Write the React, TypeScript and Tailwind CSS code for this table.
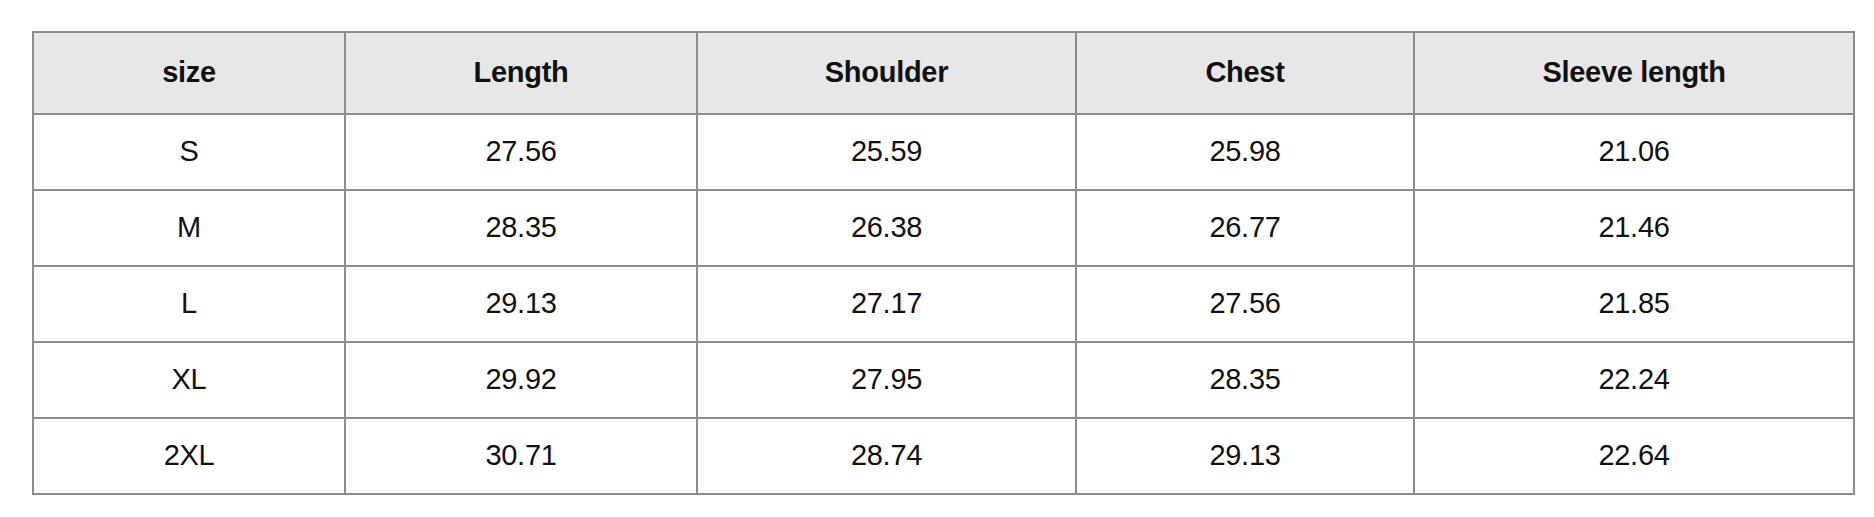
import React from 'react';

const headers = ['size', 'Length', 'Shoulder', 'Chest', 'Sleeve length'];

const rows = [
  ['S', '27.56', '25.59', '25.98', '21.06'],
  ['M', '28.35', '26.38', '26.77', '21.46'],
  ['L', '29.13', '27.17', '27.56', '21.85'],
  ['XL', '29.92', '27.95', '28.35', '22.24'],
  ['2XL', '30.71', '28.74', '29.13', '22.64'],
];

const colWidths = ['w-[312px]', 'w-[352px]', 'w-[379px]', 'w-[338px]', 'w-[440px]'];

export default function App() {
  return (
    <div className="min-h-[517px] bg-white pt-[31px] pl-[32px] font-['Liberation_Sans',Arial,sans-serif] text-[#111]">
      <table className="table-fixed border-collapse border-2 border-[#8c8c8c] w-[1823px] text-[29px] tracking-[-0.01em]">
        <colgroup>
          {colWidths.map((w, i) => (
            <col key={i} className={w} />
          ))}
        </colgroup>
        <thead>
          <tr className="bg-[#e7e7e7]">
            {headers.map((h) => (
              <th
                key={h}
                className="h-[82px] border-2 border-[#8c8c8c] p-0 text-center align-middle font-bold"
              >
                {h}
              </th>
            ))}
          </tr>
        </thead>
        <tbody>
          {rows.map((row) => (
            <tr key={row[0]}>
              {row.map((cell, i) => (
                <td
                  key={i}
                  className="h-[76px] border-2 border-[#8c8c8c] p-0 text-center align-middle font-normal"
                >
                  {cell}
                </td>
              ))}
            </tr>
          ))}
        </tbody>
      </table>
    </div>
  );
}
